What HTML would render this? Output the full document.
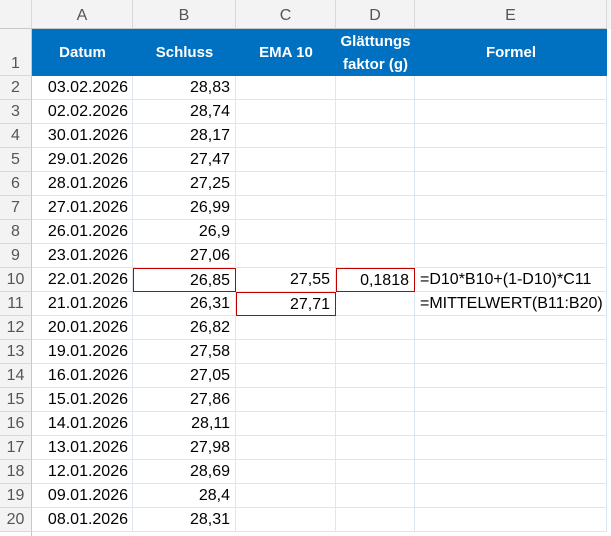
<!DOCTYPE html>
<html><head><meta charset="utf-8"><style>
body{margin:0;width:611px;height:536px;background:#fff;font-family:"Liberation Sans",sans-serif;overflow:hidden;position:relative}
.a{position:absolute;box-sizing:border-box}
.hd{background:#f3f3f3;color:#555;font-size:16px;text-align:center;line-height:31px;top:0;height:29px;border-right:1px solid #d8d8d8;border-bottom:1px solid #c8c8c8}
.rn{left:0;width:32px;background:#f3f3f3;color:#555;font-size:16px;text-align:center;border-right:1px solid #c8c8c8;border-bottom:1px solid #d8d8d8}
.c{font-size:16px;color:#000;border-right:1px solid #dde5ef;border-bottom:1px solid #dde5ef;line-height:24px;height:24px;white-space:nowrap;padding:0 5px}
.bl{background:#0070c0;color:#fff;font-weight:bold;font-size:15px;text-align:center;top:29px;height:47px;display:flex;align-items:center;justify-content:center;line-height:23px}
.red{border:1px solid #c00000}
</style></head><body>
<div class="a hd" style="left:0;width:32px"></div>
<div class="a hd" style="left:32px;width:101px">A</div>
<div class="a hd" style="left:133px;width:103px">B</div>
<div class="a hd" style="left:236px;width:100px">C</div>
<div class="a hd" style="left:336px;width:79px">D</div>
<div class="a hd" style="left:415px;width:192px">E</div>
<div class="a hd" style="left:607px;width:4px;border:none"></div>
<div class="a" style="left:31px;top:532px;width:1px;height:4px;background:#c8c8c8"></div>
<div class="a rn" style="top:29px;height:47px;line-height:70px">1</div>
<div class="a bl" style="left:32px;width:101px">Datum</div>
<div class="a bl" style="left:133px;width:103px">Schluss</div>
<div class="a bl" style="left:236px;width:100px">EMA 10</div>
<div class="a bl" style="left:336px;width:79px">Glättungs<br>faktor (g)</div>
<div class="a bl" style="left:415px;width:192px">Formel</div>
<div id="rows"></div>
<script>
var d=[["03.02.2026","28,83"],["02.02.2026","28,74"],["30.01.2026","28,17"],["29.01.2026","27,47"],["28.01.2026","27,25"],["27.01.2026","26,99"],["26.01.2026","26,9"],["23.01.2026","27,06"],["22.01.2026","26,85"],["21.01.2026","26,31"],["20.01.2026","26,82"],["19.01.2026","27,58"],["16.01.2026","27,05"],["15.01.2026","27,86"],["14.01.2026","28,11"],["13.01.2026","27,98"],["12.01.2026","28,69"],["09.01.2026","28,4"],["08.01.2026","28,31"]];
var h="";
for(var i=0;i<d.length;i++){var r=i+2,t=76+i*24;
var C="",D="",E="";
if(r==10){C="27,55";D="0,1818";E="=D10*B10+(1-D10)*C11";}
if(r==11){C="27,71";E="=MITTELWERT(B11:B20)";}
h+='<div class="a rn" style="top:'+t+'px;height:24px;line-height:24px">'+r+'</div>';
h+='<div class="a c" style="top:'+t+'px;left:32px;width:101px;text-align:right;padding-right:4px">'+d[i][0]+'</div>';
h+='<div class="a c'+(r==10?' red':'')+'" style="top:'+t+'px;left:133px;width:103px;text-align:right">'+d[i][1]+'</div>';
h+='<div class="a c'+(r==11?' red':'')+'" style="top:'+t+'px;left:236px;width:100px;text-align:right">'+C+'</div>';
h+='<div class="a c'+(r==10?' red':'')+'" style="top:'+t+'px;left:336px;width:79px;text-align:right">'+D+'</div>';
h+='<div class="a c" style="top:'+t+'px;left:415px;width:192px;padding-left:5px">'+E+'</div>';}
document.getElementById("rows").innerHTML=h;
</script>
</body></html>
